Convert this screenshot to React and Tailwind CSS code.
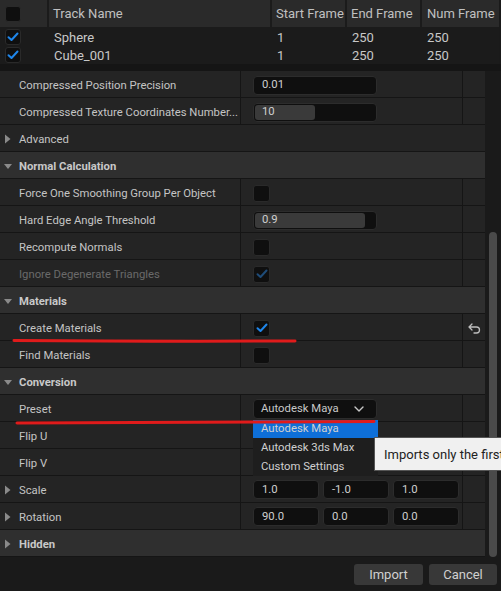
import React from 'react';

const Check = ({ color = '#1f86ea' }) => (
  <svg width="12" height="10" viewBox="0 0 12 10">
    <path d="M1.5 5.2 L4.5 8 L10.5 1.5" fill="none" stroke={color} strokeWidth="2" strokeLinecap="round" strokeLinejoin="round" />
  </svg>
);

const Box = ({ checked, dim }) => (
  <div className="w-[17px] h-[17px] mt-[2px] rounded-[3px] bg-[#0f0f0f] border border-[#2a2a2a] flex items-center justify-center">
    {checked && <Check color={dim ? '#1f4c78' : '#1f86ea'} />}
  </div>
);

const Arrow = ({ open }) =>
  open ? (
    <svg width="10" height="8" viewBox="0 0 10 8" className="absolute left-[3px] top-[11px]">
      <path d="M1 1 H9 L5 6 Z" fill="#8a8a8a" />
    </svg>
  ) : (
    <svg width="8" height="10" viewBox="0 0 8 10" className="absolute left-[4px] top-[9px]">
      <path d="M1 0.5 V9.5 L6.5 5 Z" fill="#8a8a8a" />
    </svg>
  );

const TextInput = ({ value, fill }) => (
  <div className="relative w-[124px] h-[19px] mt-[2px] rounded-[4px] bg-[#0f0f0f] border border-[#2c2c2c] overflow-hidden flex items-center">
    {fill && <div className="absolute left-[1px] top-[1px] bottom-[1px] rounded-[3px] bg-[#3a3a3a]" style={{ width: fill }} />}
    <span className="relative pl-[8px] pt-[1px] text-[11.3px] text-[#d0d0d0]">{value}</span>
  </div>
);

const SmallInput = ({ value }) => (
  <div className="w-[66px] h-[19px] rounded-[4px] bg-[#0f0f0f] border border-[#2c2c2c] flex items-center">
    <span className="pl-[8px] pt-[1px] text-[11.3px] text-[#d0d0d0]">{value}</span>
  </div>
);

const Row = ({ label, children, expander, disabled, reset }) => (
  <div className="h-[27px] flex border-b border-[#151515] bg-[#242424]">
    <div className="relative w-[241px] border-r border-[#151515] flex items-center pl-[19px] pt-[4px]">
      {expander && <Arrow />}
      <span className={`text-[11.3px] whitespace-nowrap ${disabled ? 'text-[#6a6a6a]' : 'text-[#c4c4c4]'}`}>{label}</span>
    </div>
    <div className="w-[222px] border-r border-[#151515] flex items-center pl-[12px]">{children}</div>
    <div className="w-[22px] flex items-center justify-center pt-[2px]">
      {reset && (
        <svg width="13" height="11" viewBox="0 0 13 11">
          <path d="M4 1 L1 4 L4 7 M1.5 4 H8.5 A3 3 0 0 1 8.5 10 H6" fill="none" stroke="#bdbdbd" strokeWidth="1.3" strokeLinecap="round" strokeLinejoin="round" />
        </svg>
      )}
    </div>
  </div>
);

const Section = ({ label, open = true }) => (
  <div className="relative h-[27px] flex items-center pl-[19px] pt-[4px] border-b border-[#151515] bg-[#2f2f2f]">
    <Arrow open={open} />
    <span className="text-[11.3px] font-bold text-[#c8c8c8]">{label}</span>
  </div>
);

const Plain = ({ label }) => (
  <div className="relative h-[27px] flex items-center pl-[19px] pt-[4px] border-b border-[#151515] bg-[#242424]">
    <Arrow />
    <span className="text-[11.3px] text-[#c4c4c4]">{label}</span>
  </div>
);

const tracks = [
  { name: 'Sphere', start: 1, end: 250, num: 250 },
  { name: 'Cube_001', start: 1, end: 250, num: 250 },
];

export default function App() {
  return (
    <div className="relative w-[501px] h-[591px] overflow-hidden bg-[#1a1a1a] font-['Roboto',sans-serif]">
      {/* Track table */}
      <div className="w-[499px] h-[64px] bg-[#1b1b1b]">
        <div className="h-[27px] flex bg-[#2a2a2a] text-[13px] text-[#c0c0c0]">
          <div className="w-[49px] border-r-2 border-[#1b1b1b] flex items-center pl-[5px]">
            <div className="w-[16px] h-[16px] rounded-[3px] bg-[#0f0f0f] border border-[#2a2a2a]" />
          </div>
          <div className="w-[223px] border-r-2 border-[#1b1b1b] flex items-center pl-[4px]">Track Name</div>
          <div className="w-[75px] border-r-2 border-[#1b1b1b] flex items-center pl-[4px]">Start Frame</div>
          <div className="w-[75px] border-r-2 border-[#1b1b1b] flex items-center pl-[4px]">End Frame</div>
          <div className="flex-1 flex items-center pl-[5px]">Num Frame</div>
        </div>
        <div className="h-[1px]" />
        {tracks.map((t) => (
          <div key={t.name} className="h-[18px] flex items-center text-[13px] text-[#c8c8c8]">
            <div className="w-[49px] pl-[5px]">
              <div className="w-[16px] h-[16px] rounded-[3px] bg-[#0f0f0f] border border-[#2a2a2a] flex items-center justify-center">
                <Check />
              </div>
            </div>
            <div className="w-[223px] pl-[5px] pt-[2px]">{t.name}</div>
            <div className="w-[75px] pl-[5px] pt-[2px]">{t.start}</div>
            <div className="w-[75px] pl-[5px] pt-[2px]">{t.end}</div>
            <div className="flex-1 pl-[5px] pt-[2px]">{t.num}</div>
          </div>
        ))}
      </div>
      <div className="h-[7px] bg-[#151515]" />

      {/* Properties */}
      <div className="flex">
        <div className="w-[485px]">
          <Row label="Compressed Position Precision"><TextInput value="0.01" /></Row>
          <Row label="Compressed Texture Coordinates Number..."><TextInput value="10" fill={60} /></Row>
          <Plain label="Advanced" />
          <Section label="Normal Calculation" />
          <Row label="Force One Smoothing Group Per Object"><Box /></Row>
          <Row label="Hard Edge Angle Threshold"><TextInput value="0.9" fill={110} /></Row>
          <Row label="Recompute Normals"><Box /></Row>
          <Row label="Ignore Degenerate Triangles" disabled><Box checked dim /></Row>
          <Section label="Materials" />
          <Row label="Create Materials" reset><Box checked /></Row>
          <Row label="Find Materials"><Box /></Row>
          <Section label="Conversion" />
          <Row label="Preset">
            <div className="w-[124px] h-[20px] mt-[2px] rounded-[4px] bg-[#0f0f0f] border border-[#2c2c2c] flex items-center justify-between pl-[7px] pr-[12px]">
              <span className="text-[11.3px] text-[#c8c8c8] pt-[1px]">Autodesk Maya</span>
              <svg width="10" height="6" viewBox="0 0 10 6">
                <path d="M1 1 L5 5 L9 1" fill="none" stroke="#c8c8c8" strokeWidth="1.4" strokeLinecap="round" strokeLinejoin="round" />
              </svg>
            </div>
          </Row>
          <Row label="Flip U" />
          <Row label="Flip V" />
          <Row label="Scale" expander>
            <div className="flex gap-[4px] mt-[1px]">
              <SmallInput value="1.0" />
              <SmallInput value="-1.0" />
              <SmallInput value="1.0" />
            </div>
          </Row>
          <Row label="Rotation" expander>
            <div className="flex gap-[4px] mt-[1px]">
              <SmallInput value="90.0" />
              <SmallInput value="0.0" />
              <SmallInput value="0.0" />
            </div>
          </Row>
          <Section label="Hidden" open={false} />
        </div>
        <div className="w-[16px] flex flex-col pt-[161px] pl-[4px]">
          <div className="w-[8px] h-[325px] rounded-full bg-[#4a4a4a]" />
        </div>
      </div>

      {/* Footer */}
      <div className="h-[34px] flex items-center justify-end gap-[6px] pr-[4px] pt-[1px]">
        <button className="w-[69px] h-[21px] rounded-[3px] bg-[#383838] text-[13px] text-[#d0d0d0] pt-[1px]">Import</button>
        <button className="w-[68px] h-[21px] rounded-[3px] bg-[#383838] text-[13px] text-[#d0d0d0] pt-[1px]">Cancel</button>
      </div>

      {/* Dropdown menu */}
      <div className="absolute left-[253px] top-[420px] w-[125px] bg-[#1e1e1e] text-[11.3px] text-[#d0d0d0]">
        <div className="h-[18px] flex items-center pl-[8px] pt-[1px] bg-[#0e6fd8]">Autodesk Maya</div>
        <div className="h-[19px] flex items-center pl-[8px] pt-[1px]">Autodesk 3ds Max</div>
        <div className="h-[19px] flex items-center pl-[8px] pt-[1px]">Custom Settings</div>
      </div>

      {/* Tooltip */}
      <div className="absolute left-[374px] top-[437px] w-[140px] h-[34px] bg-[#f0f0f0] border border-[#555] flex items-center pl-[9px] pt-[1px] whitespace-nowrap text-[13px] text-[#222]">
        Imports only the first frame
      </div>

      {/* Annotation strokes */}
      <svg className="absolute left-0 top-0 pointer-events-none" width="501" height="591">
        <path d="M14 340.5 Q150 341.5 295 341" fill="none" stroke="#e01b1b" strokeWidth="3" strokeLinecap="round" />
        <path d="M17 423 Q200 422 374 421.5" fill="none" stroke="#e01b1b" strokeWidth="3" strokeLinecap="round" />
      </svg>
    </div>
  );
}
